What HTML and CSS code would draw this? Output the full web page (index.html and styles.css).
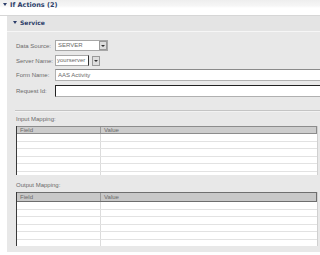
FILE: index.html
```html
<!DOCTYPE html>
<html lang="en">
<head>
    <meta charset="UTF-8">
    <title>If Actions</title>
    <link rel="stylesheet" href="styles.css">
</head>
<body>
    <div class="topbar"><span class="arrow"></span>If Actions (2)</div>

    <div class="panel">
        <div class="panel-head"><span class="arrow"></span>Service</div>

        <div class="form">
            <div class="row row-sel">
                <label>Data Source:</label>
                <div class="combo combo-wide">
                    <span class="combo-text">SERVER</span>
                    <span class="drop"><span class="tri"></span></span>
                </div>
            </div>
            <div class="row row-sel">
                <label>Server Name:</label>
                <div class="combo-edit">
                    <span class="edit-text">yourserver</span>
                </div>
                <span class="drop drop-free"><span class="tri"></span></span>
            </div>
            <div class="row">
                <label>Form Name:</label>
                <input class="field" type="text" value="AAS Activity">
            </div>
            <div class="row">
                <label>Request Id:</label>
                <input class="field field-dark" type="text">
            </div>
        </div>

        <div class="sep"></div>

        <div class="caption">Input Mapping:</div>
        <div class="grid grid-in">
            <div class="grid-head"><span>Field</span><span>Value</span></div>
            <div class="grid-row"><span></span><span></span></div>
            <div class="grid-row"><span></span><span></span></div>
            <div class="grid-row"><span></span><span></span></div>
            <div class="grid-row"><span></span><span></span></div>
            <div class="grid-row"><span></span><span></span></div>
            <div class="grid-row"><span></span><span></span></div>
        </div>

        <div class="caption caption-out">Output Mapping:</div>
        <div class="grid grid-out">
            <div class="grid-head"><span>Field</span><span>Value</span></div>
            <div class="grid-row"><span></span><span></span></div>
            <div class="grid-row"><span></span><span></span></div>
            <div class="grid-row"><span></span><span></span></div>
            <div class="grid-row"><span></span><span></span></div>
            <div class="grid-row"><span></span><span></span></div>
            <div class="grid-row"><span></span><span></span></div>
        </div>
    </div>
</body>
</html>
```

FILE: styles.css
```css
body {
    margin: 0;
    background-color: #ffffff;
    font-family: "Liberation Sans", Arial, sans-serif;
    font-size: 6px;
    color: #6a6a6a;
    overflow: hidden;
}
.topbar {
    height: 16px;
    box-sizing: border-box;
    padding: 1px 0 0 3px;
    line-height: 9px;
    background: linear-gradient(#eeeeee 0, #f6f6f6 6px, #ffffff 8px);
    border-bottom: 1px solid #d6d6d6;
    font-family: "DejaVu Sans", Arial, sans-serif;
    font-weight: bold;
    font-size: 6.5px;
    color: #2c3e6a;
}
.arrow {
    display: inline-block;
    width: 0;
    height: 0;
    border-left: 2px solid transparent;
    border-right: 2px solid transparent;
    border-top: 3px solid #2c3e6a;
    margin-right: 3px;
    vertical-align: 1px;
}
.panel {
    margin-left: 7px;
    height: 236px;
    background-color: #e8e8e8;
}
.panel-head {
    height: 16px;
    box-sizing: border-box;
    padding: 3px 0 0 6px;
    line-height: 8px;
    font-family: "DejaVu Sans", Arial, sans-serif;
    font-weight: bold;
    font-size: 6px;
    color: #2c3e6a;
    background-color: #e4e4e4;
    border-bottom: 1px solid #f6f6f6;
}
.form {
    padding: 8px 0 0 9px;
}
.row {
    display: flex;
    align-items: center;
    height: 12px;
    margin-bottom: 4px;
}
.row-sel {
    height: 11px;
}
.row-sel + .row-sel {
    margin-bottom: 3px;
}
label {
    width: 39px;
    flex: none;
    white-space: nowrap;
}
.combo {
    display: flex;
    height: 11px;
    box-sizing: border-box;
    border: 1px solid #a7a7a7;
    background-color: #ffffff;
}
.combo-wide {
    width: 53px;
}
.combo-text {
    flex: 1;
    padding-left: 2px;
    line-height: 9px;
}
.drop {
    width: 8px;
    height: 9px;
    box-sizing: border-box;
    border: 1px solid #9a9a9a;
    background-color: #dedede;
    display: flex;
    align-items: center;
    justify-content: center;
}
.drop-free {
    height: 10px;
    margin-left: 3px;
}
.tri {
    width: 0;
    height: 0;
    border-left: 2px solid transparent;
    border-right: 2px solid transparent;
    border-top: 2px solid #333333;
}
.combo-edit {
    width: 34px;
    height: 11px;
    box-sizing: border-box;
    border: 1px solid #a7a7a7;
    border-right: 1px solid #333333;
    background-color: #ffffff;
    overflow: hidden;
    white-space: nowrap;
}
.edit-text {
    padding-left: 1px;
    line-height: 9px;
}
.field {
    flex: 1;
    min-width: 0;
    height: 12px;
    box-sizing: border-box;
    margin: 0;
    padding: 0 2px;
    border: 1px solid #b0b0b0;
    border-top-color: #8a8a8a;
    border-right: none;
    background-color: #ffffff;
    font-family: "Liberation Sans", Arial, sans-serif;
    font-size: 6px;
    color: #6a6a6a;
    outline: none;
}
.field-dark {
    border-top: 1px solid #222222;
    border-left: 1px solid #222222;
}
.sep {
    margin: 13px 0 0 8px;
    height: 1px;
    background-color: #c4c4c4;
    border-bottom: 1px solid #f2f2f2;
}
.caption {
    margin-left: 9px;
    height: 14px;
    line-height: 14px;
}
.caption-out {
    margin-top: 4px;
    height: 13px;
    line-height: 13px;
}
.grid {
    margin-left: 9px;
    width: 302px;
    box-sizing: border-box;
    border-left: 1px solid #3a3a3a;
    border-right: 1px solid #d0d0d0;
    background-color: #ffffff;
    overflow: hidden;
}
.grid-in {
    height: 49px;
}
.grid-out {
    height: 54px;
}
.grid-head,
.grid-row {
    display: grid;
    grid-template-columns: 83px 1fr;
}
.grid-head {
    height: 8px;
    box-sizing: border-box;
    line-height: 6px;
    background-color: #cdcdcd;
    border: 1px solid #8c8c8c;
    border-left: none;
}
.grid-out .grid-head {
    height: 10px;
    line-height: 8px;
    border-color: #6e6e6e;
    background-color: #c8c8c8;
}
.grid-head span {
    padding-left: 3px;
}
.grid-head span + span {
    border-left: 1px solid #9a9a9a;
}
.grid-row {
    height: 7.5px;
    box-sizing: border-box;
    border-bottom: 1px solid #e2e2e2;
}
.grid-row span + span {
    border-left: 1px solid #dcdcdc;
}
```
